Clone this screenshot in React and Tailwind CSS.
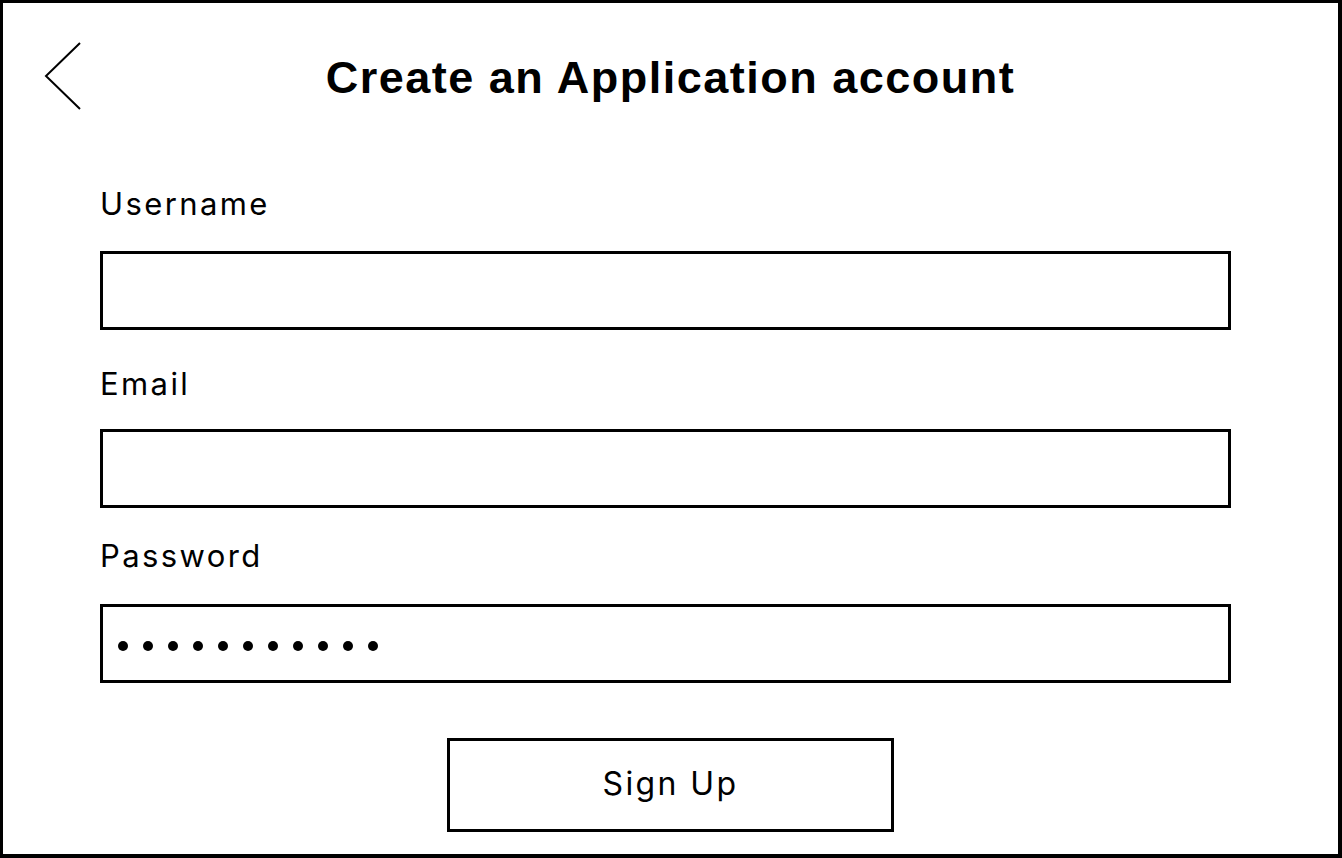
export default function App() {
  const font = { fontFamily: '"Liberation Sans", Arial, sans-serif' };
  const labelFont = { fontFamily: 'Inter, "Liberation Sans", Arial, sans-serif' };

  return (
    <div
      className="w-[1342px] h-[858px] bg-white text-black border-t-[3px] border-l-[3px] border-r-4 border-b-4 border-black flex flex-col"
      style={font}
    >
      {/* header */}
      <div className="grid grid-cols-[1fr_auto_1fr] items-start pt-[37px]">
        <button className="ml-[40px] w-[40px] h-[70px] mt-[1px]">
          <svg width="40" height="70" viewBox="0 0 40 70" fill="none">
            <path d="M37 2 L3 35 L37 68" stroke="black" strokeWidth="2" />
          </svg>
        </button>
        <h1 className="text-[45px] leading-[52px] font-bold tracking-[1.5px] mt-[12px]">
          Create an Application account
        </h1>
        <div />
      </div>

      {/* form */}
      <form className="flex flex-col ml-[97px] w-[1131px] mt-[75px]" style={labelFont}>
        <label className="text-[31px] leading-[36px] tracking-[2.4px]">Username</label>
        <input
          type="text"
          className="mt-[29px] h-[79px] border-[3px] border-black outline-none px-4"
        />

        <label className="mt-[36px] text-[31px] leading-[36px] tracking-[2.4px]">Email</label>
        <input
          type="email"
          className="mt-[27px] h-[79px] border-[3px] border-black outline-none px-4"
        />

        <label className="mt-[30px] text-[31px] leading-[36px] tracking-[2.4px]">Password</label>
        <div
          aria-label="password"
          className="mt-[30px] h-[79px] border-[3px] border-black flex items-center pl-[15px] pt-[5px] gap-[15px]"
        >
          {Array.from({ length: 11 }).map((_, i) => (
            <span key={i} className="w-[10px] h-[10px] rounded-full bg-black" />
          ))}
        </div>

        <div className="flex justify-center mt-[55px] pl-[10px]">
          <button
            type="button"
            className="w-[447px] h-[94px] border-[3px] border-black text-[32px] tracking-[2.4px] pb-[2px]"
          >
            Sign Up
          </button>
        </div>
      </form>
    </div>
  );
}
